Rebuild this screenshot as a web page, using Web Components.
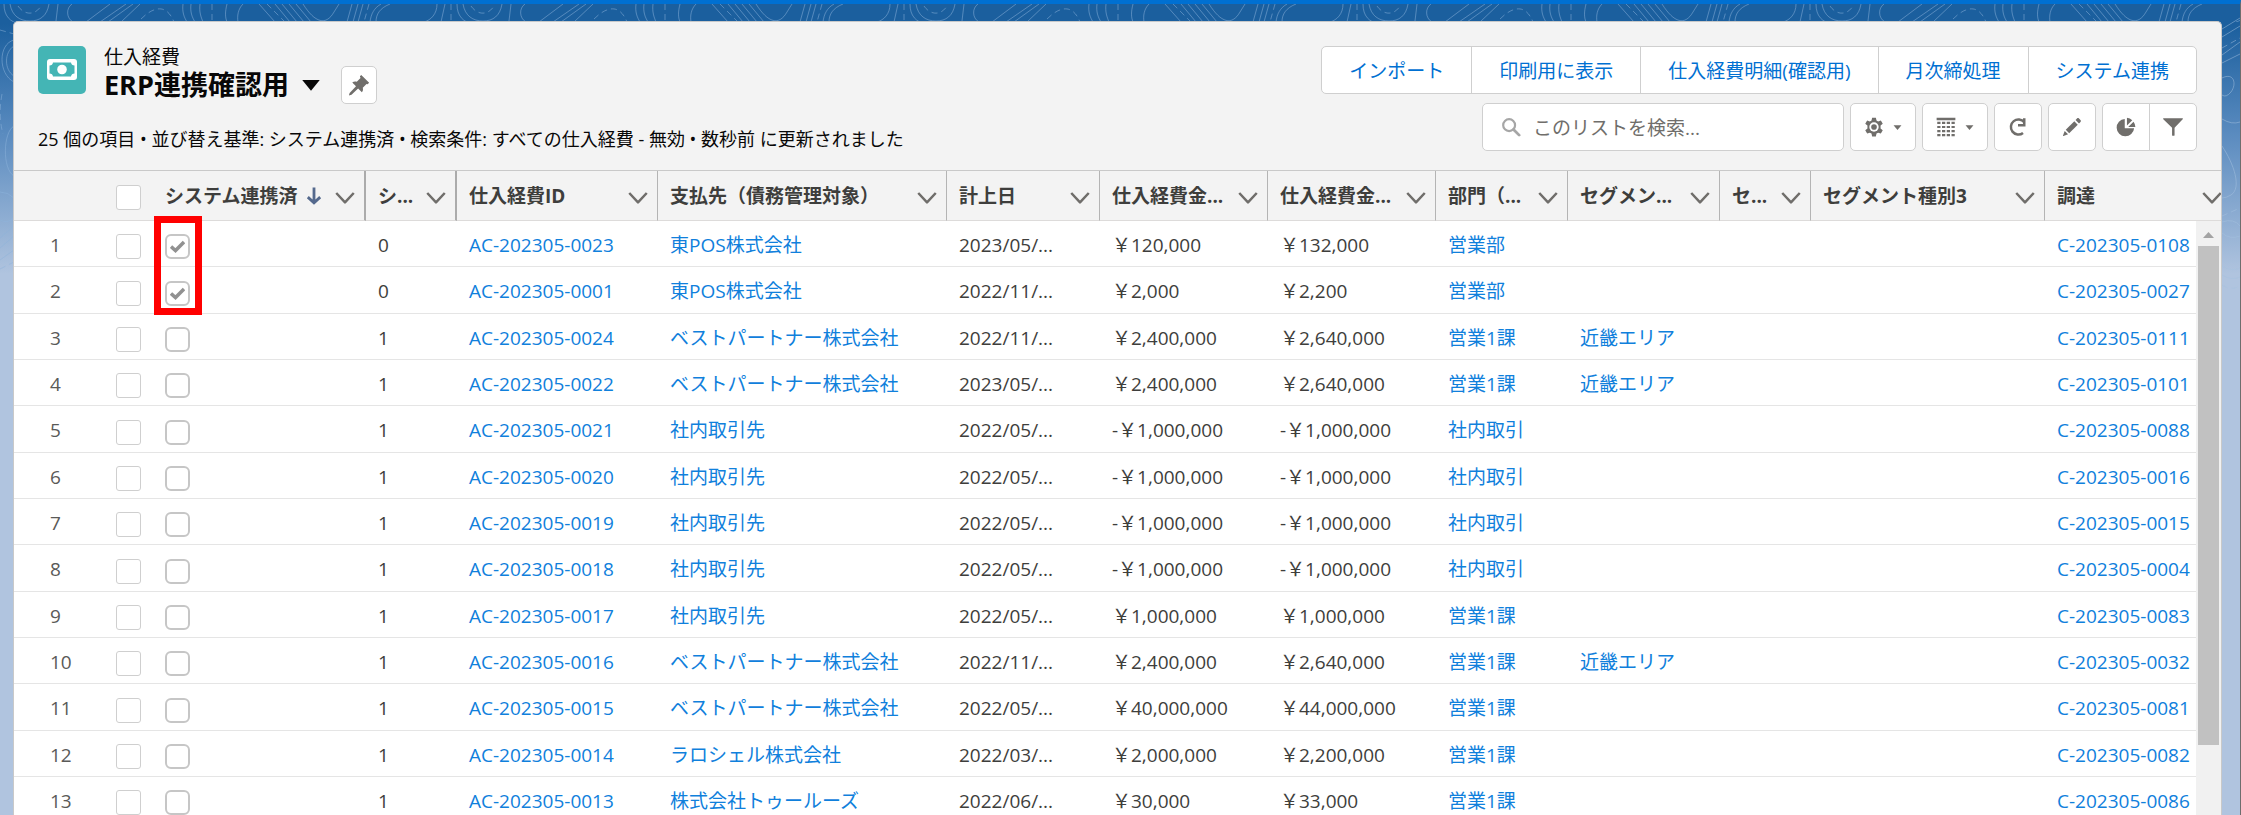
<!DOCTYPE html>
<html lang="ja">
<head>
<meta charset="utf-8">
<meta name="viewport" content="width=device-width, initial-scale=1">
<title>仕入経費</title>
<style>
  html, body { margin: 0; height: 100%; overflow: hidden; }
  body {
    font-family: "Open Sans", "Noto Sans CJK JP", sans-serif;
    font-size: 19px;
    color: #080707;
  }
</style>
</head>
<body>
<app-shell>
  <list-card>
    <list-header slot="header"></list-header>
    <list-table></list-table>
  </list-card>
</app-shell>

<script>
// ---- icons ----

const ICONS = {
  cash: `<rect x="1" y="5" width="30" height="21" rx="3" fill="currentColor"/>
    <path d="M7 8.500h18a3.500 3.500 0 0 0 3.500 3v8a3.500 3.500 0 0 0-3.500 3H7a3.500 3.500 0 0 0-3.500-3v-8a3.500 3.500 0 0 0 3.500-3z" fill="#44b5b5"/>
    <circle cx="16" cy="15.500" r="4.800" fill="currentColor"/>`,
  pin: `<path d="M19 2.500l10.500 10.500-2 2-1.500-.5-5 5c.7 2.500.4 4.500-1.200 6l-5-5L6 29l-3.500 1 1-3.500 8.500-8.800-5-5c1.700-1.500 3.700-1.800 6-1.200l5-5-.8-2.200z" fill="currentColor"/>`,
  caret: `<path d="M2 8h28L16 25z" fill="currentColor"/>`,
  search: `<circle cx="13" cy="13" r="9.500" fill="none" stroke="currentColor" stroke-width="3.500"/>
    <path d="M20 20l9 9" stroke="currentColor" stroke-width="4.500" stroke-linecap="round"/>`,
  gear: `<path d="M13 1h6l1 4.500 2.600 1.500 4.400-1.400 3 5.100-3.500 3v4.600l3.500 3-3 5.100-4.400-1.400-2.600 1.500-1 4.500h-6l-1-4.500-2.600-1.500-4.400 1.400-3-5.100 3.500-3v-4.600l-3.500-3 3-5.100 4.400 1.400 2.600-1.500z" fill="currentColor"/>
    <circle cx="16" cy="16" r="7.500" fill="#fff"/><circle cx="16" cy="16" r="4.500" fill="currentColor"/>`,
  grid: `<path d="M1 1h30v4H1z" fill="currentColor"/>
    <path d="M2 9.500h28M2 16h28M2 22.500h28M2 29h28" stroke="currentColor" stroke-width="3.500" stroke-dasharray="5.200 2.400"/>`,
  refresh: `<path d="M26 8.500A12 12 0 1 0 24 25.500" fill="none" stroke="currentColor" stroke-width="4"/>
    <path d="M28 2v13H16v-4h8V2z" fill="currentColor"/>`,
  pencil: `<path d="M24 2.500c1-1 2.200-1 3.200 0l2.300 2.300c1 1 1 2.200 0 3.200l-2.300 2.300-5.500-5.500z" fill="currentColor"/>
    <path d="M19.700 6.800l5.500 5.500L11.500 26 6 20.500z" fill="currentColor"/>
    <path d="M4.300 22.300l5.400 5.400-7.300 2.500c-.6.200-1-.2-.8-.8z" fill="currentColor"/>`,
  pie: `<path d="M14 3v15h15A14 14 0 1 1 14 3z" fill="currentColor"/>
    <path d="M17.500 1a14 14 0 0 1 8.500 4l-8.500 8.500z M28 7.500a14 14 0 0 1 3 8.500H19.500z" fill="currentColor"/>`,
  filter: `<path d="M1 2h30c.8 0 1 1 .5 1.500L18.500 17v12c0 1.500-4 1.500-4 0V17L.5 3.500C0 3 .2 2 1 2z" fill="currentColor"/>`,
  chevron: `<path d="M2 8l14 15L30 8" fill="none" stroke="currentColor" stroke-width="4" stroke-linejoin="round"/>`,
  arrow: `<path d="M16 1v26M5 18l11 10 11-10" fill="none" stroke="currentColor" stroke-width="5"/>`
};

class UiIcon extends HTMLElement {
  constructor() {
    super();
    this.attachShadow({ mode: "open" });
  }

  connectedCallback() {
    this.shadowRoot.innerHTML = `
      <style>
        :host { display: inline-flex; flex: none; width: 20px; height: 20px; }
        svg { width: 100%; height: 100%; }
      </style>
      <svg viewBox="0 0 32 32" aria-hidden="true">${ICONS[this.getAttribute("name")]}</svg>
    `;
  }
}
customElements.define("ui-icon", UiIcon);

// ---- page background ----

class AppShell extends HTMLElement {
  constructor() {
    super();
    this.attachShadow({ mode: "open" });
    this.shadowRoot.innerHTML = `
      <style>
        :host {
          display: block;
          box-sizing: border-box;
          height: 100vh;
          overflow: hidden;
          position: relative;
          padding: 17px 18px 0 13px;
          border-top: 4px solid #0070d2;
          border-right: 1px solid #6e6e6e;
          background: linear-gradient(#1b5f9e 0, #1b5f9e 20px, #5a8bbf 130px, #b0c4df 270px);
        }
        .waves { position: absolute; inset: 0; width: 100%; height: 300px; }
        .waves.side { left: auto; right: 0; width: 18px; }
        main { position: relative; height: 100%; }
      </style>
      <svg class="waves" aria-hidden="true" fill="none" stroke="#8db4dc" stroke-opacity=".5">
        <defs>
          <pattern id="contour" width="453" height="300" patternUnits="userSpaceOnUse">
            <path d="M4 0C4 12 10 18 20 20M10 0C12 12 20 17 30 17S47 12 49 0M58 0L56 17M72 0C66 4 66 14 73 18M110 0L86 18M126 0L100 18M133 0L108 18M140 0L121 18M183 0C182 8 184 13 187 18M191 0C190 8 192 13 195 18M200 0C199 8 201 13 203 18M227 0C225 8 225 13 227 18M243 0C238 5 237 12 238 18M259 0L275 18M275 0L290 18M282 0L297 18M289 0L304 18M296 0L311 18M303 0C315 19 326 22 334 8L339 0M352 0L347 18M358 0L353 18M363 0L358 18M390 0C380 4 376 10 376 18M381 0C374 4 371 10 370 18M437 0C437 10 431 16 424 18M445 0L441 18"/>
            <path stroke-dasharray="6 4" d="M18 2C24 11 35 12 41 2M141 15C152 4 166-2 174 18M212 0V18M267 0L285 18M369 0L364 18M451 0V18"/>
          </pattern>
        </defs>
        <rect width="100%" height="18" fill="url(#contour)" stroke="none"/>
        <path d="M14 36C-2 40-2 70 14 78M14 42C4 48 4 66 14 72M14 122C3 128 2 165 14 172M0 188Q8 188 14 194M0 216Q7 220 14 214M0 234L14 222M0 244L14 232M0 256L14 246"/>
        <path stroke-dasharray="6 4" d="M0 26L14 30M2 90Q-2 112 3 130M0 265L14 258"/>
      </svg>
      <svg class="waves side" aria-hidden="true" fill="none" stroke="#a5c1e0" stroke-opacity=".5">
        <path d="M0 25L18 14M0 33L18 22M0 51L18 38M0 59L18 50M0 74C12 68 15 80 9 88Q4 94 0 91M0 115Q10 121 18 118M0 142C12 160 20 184 9 191Q4 194 0 194M0 218Q12 214 18 222M0 229Q8 236 18 232M0 262Q10 268 18 264M0 271Q10 277 18 273"/>
        <path stroke-dasharray="6 4" d="M0 44L18 34M0 212L18 204M0 281Q10 287 18 282"/>
      </svg>
      <main><slot></slot></main>
    `;
  }
}
customElements.define("app-shell", AppShell);

class ListCard extends HTMLElement {
  constructor() {
    super();
    this.attachShadow({ mode: "open" });
    this.shadowRoot.innerHTML = `
      <style>
        :host {
          display: flex;
          flex-direction: column;
          box-sizing: border-box;
          height: 100%;
          overflow: hidden;
          border: 1px solid #c9c9c9;
          border-bottom: 0;
          border-radius: 5px 5px 0 0;
          background: #f3f3f3;
        }
      </style>
      <slot name="header"></slot>
      <slot></slot>
    `;
  }
}
customElements.define("list-card", ListCard);

// ---- list view header ----

class ListHeader extends HTMLElement {
  constructor() {
    super();
    this.attachShadow({ mode: "open" });
    this.shadowRoot.innerHTML = `
      <style>
        :host {
          display: flex;
          justify-content: space-between;
          flex: none;
          padding: 24px 24px 19px;
        }
        button, input { font: inherit; }
        button {
          display: inline-flex;
          align-items: center;
          justify-content: center;
          gap: 9px;
          height: 48px;
          padding: 0;
          border: 1px solid #cfcfcf;
          border-radius: 5px;
          background: #fff;
          color: #706e6b;
        }
        .info { display: flex; flex-direction: column; justify-content: space-between; }
        .title { display: flex; gap: 18px; }
        .badge {
          display: flex;
          align-items: center;
          justify-content: center;
          width: 48px;
          height: 48px;
          border-radius: 5px;
          background: #44b5b5;
          color: #fff;
        }
        .badge ui-icon { width: 32px; height: 32px; }
        p, h1 { margin: 0; }
        .object { line-height: 22px; }
        .name { display: flex; align-items: center; height: 34px; }
        h1 { font-size: 27px; line-height: 34px; }
        .name > .pick {
          width: 20px; height: 20px; margin: 0 20px 0 12px;
          border: 0; background: none; color: #080707;
        }
        .name > .pin { width: 36px; height: 38px; }
        .pin ui-icon { width: 24px; height: 24px; }
        .status { font-size: 18px; line-height: 24px; }
        .tools { display: flex; flex-direction: column; align-items: flex-end; gap: 9px; }
        .row { display: flex; gap: 6px; }
        .group { display: flex; }
        .group button { border-radius: 0; margin-left: -1px; }
        .group button:first-child { border-radius: 5px 0 0 5px; margin-left: 0; }
        .group button:last-child { border-radius: 0 5px 5px 0; }
        .actions button { padding: 0 27px; color: #0070d2; }
        .search {
          display: flex;
          align-items: center;
          gap: 12px;
          box-sizing: border-box;
          width: 362px;
          padding: 0 18px;
          border: 1px solid #cfcfcf;
          border-radius: 5px;
          background: #fff;
          color: #a6a6a6;
        }
        input { flex: 1; min-width: 0; padding: 2px 0 0; border: 0; outline: 0; background: none; }
        input::placeholder { color: #706e6b; opacity: 1; }
        .menu { width: 66px; }
        .menu ui-icon + ui-icon { width: 9px; height: 9px; }
        .icon { width: 48px; }
      </style>
      <div class="info">
        <div class="title">
          <span class="badge"><ui-icon name="cash"></ui-icon></span>
          <div>
            <p class="object">仕入経費</p>
            <div class="name">
              <h1>ERP連携確認用</h1>
              <button class="pick" aria-label="リストビューを選択"><ui-icon name="caret"></ui-icon></button>
              <button class="pin" aria-label="ピン"><ui-icon name="pin"></ui-icon></button>
            </div>
          </div>
        </div>
        <p class="status">25 個の項目 • 並び替え基準: システム連携済 • 検索条件: すべての仕入経費 - 無効 • 数秒前 に更新されました</p>
      </div>
      <div class="tools">
        <div class="group actions">
          <button>インポート</button>
          <button>印刷用に表示</button>
          <button>仕入経費明細(確認用)</button>
          <button>月次締処理</button>
          <button>システム連携</button>
        </div>
        <div class="row">
          <label class="search">
            <ui-icon name="search"></ui-icon>
            <input type="search" placeholder="このリストを検索..." aria-label="このリストを検索">
          </label>
          <button class="menu" aria-label="リストビューコントロール"><ui-icon name="gear"></ui-icon><ui-icon name="caret"></ui-icon></button>
          <button class="menu" aria-label="表示形式"><ui-icon name="grid"></ui-icon><ui-icon name="caret"></ui-icon></button>
          <button class="icon" aria-label="更新"><ui-icon name="refresh"></ui-icon></button>
          <button class="icon" aria-label="編集"><ui-icon name="pencil"></ui-icon></button>
          <div class="group">
            <button class="icon" aria-label="グラフ"><ui-icon name="pie"></ui-icon></button>
            <button class="icon" aria-label="絞り込み"><ui-icon name="filter"></ui-icon></button>
          </div>
        </div>
      </div>
    `;
  }
}
customElements.define("list-header", ListHeader);

// ---- table ----

// label, width
const COLUMNS = [
  ["システム連携済", 213],
  ["シ...", 91],
  ["仕入経費ID", 201],
  ["支払先（債務管理対象）", 289],
  ["計上日", 153],
  ["仕入経費金...", 168],
  ["仕入経費金...", 168],
  ["部門（...", 132],
  ["セグメン...", 152],
  ["セ...", 91],
  ["セグメント種別3", 234],
  ["調達", 187]
];

// done, count, id, payee, date, amount, amount with tax, department, segment, procurement
const ROWS = [
  [true, 0, "0023", "東POS株式会社", "2023/05/...", "￥120,000", "￥132,000", "営業部", "", "0108"],
  [true, 0, "0001", "東POS株式会社", "2022/11/...", "￥2,000", "￥2,200", "営業部", "", "0027"],
  [false, 1, "0024", "ベストパートナー株式会社", "2022/11/...", "￥2,400,000", "￥2,640,000", "営業1課", "近畿エリア", "0111"],
  [false, 1, "0022", "ベストパートナー株式会社", "2023/05/...", "￥2,400,000", "￥2,640,000", "営業1課", "近畿エリア", "0101"],
  [false, 1, "0021", "社内取引先", "2022/05/...", "-￥1,000,000", "-￥1,000,000", "社内取引", "", "0088"],
  [false, 1, "0020", "社内取引先", "2022/05/...", "-￥1,000,000", "-￥1,000,000", "社内取引", "", "0016"],
  [false, 1, "0019", "社内取引先", "2022/05/...", "-￥1,000,000", "-￥1,000,000", "社内取引", "", "0015"],
  [false, 1, "0018", "社内取引先", "2022/05/...", "-￥1,000,000", "-￥1,000,000", "社内取引", "", "0004"],
  [false, 1, "0017", "社内取引先", "2022/05/...", "￥1,000,000", "￥1,000,000", "営業1課", "", "0083"],
  [false, 1, "0016", "ベストパートナー株式会社", "2022/11/...", "￥2,400,000", "￥2,640,000", "営業1課", "近畿エリア", "0032"],
  [false, 1, "0015", "ベストパートナー株式会社", "2022/05/...", "￥40,000,000", "￥44,000,000", "営業1課", "", "0081"],
  [false, 1, "0014", "ラロシェル株式会社", "2022/03/...", "￥2,000,000", "￥2,200,000", "営業1課", "", "0082"],
  [false, 1, "0013", "株式会社トゥールーズ", "2022/06/...", "￥30,000", "￥33,000", "営業1課", "", "0086"]
];

const link = text => (text ? `<a href="#">${text}</a>` : "");

class ListTable extends HTMLElement {
  constructor() {
    super();
    this.attachShadow({ mode: "open" });
  }

  connectedCallback() {
    this.shadowRoot.innerHTML = `
      <style>
        :host {
          display: block;
          flex: 1;
          min-height: 0;
          position: relative;
          overflow: hidden;
          border-top: 1px solid #c9c9c9;
          color: #3e3e3c;
        }
        table {
          width: calc(100% + 11px);
          table-layout: fixed;
          border-collapse: separate;
          border-spacing: 0;
        }
        th, td { box-sizing: border-box; padding: 0 0 0 12px; text-align: left; white-space: nowrap; line-height: 24px; }
        th { height: 50px; border-right: 1px solid #b4b4b4; border-bottom: 1px solid #dddbda; background: #f3f3f3; }
        th.plain { border-right: 0; }
        th.wide { border-right: 2px solid #ababab; }
        td { height: 46px; padding-top: 2px; border-bottom: 1px solid #e5e5e5; background: #fff; }
        tr:nth-child(3n + 2) td { height: 47px; }
        td.num { padding-left: 36px; color: #5a5a58; }
        .head { display: flex; align-items: center; gap: 8px; }
        .head button {
          display: flex;
          margin: 4px 9px 0 auto;
          padding: 0;
          border: 0;
          background: none;
          color: #706e6b;
        }
        .head .sort { width: 18px; height: 20px; color: #54698d; }
        a { color: #1080dc; text-decoration: none; }
        input {
          display: block;
          appearance: none;
          box-sizing: border-box;
          width: 25px;
          height: 25px;
          margin: 4px 0 0;
          border: 1px solid #cfcfcf;
          border-radius: 3px;
          background: #fff;
        }
        .flag { position: relative; width: 25px; }
        .flag input { border: 2px solid #c6c6c6; border-radius: 6px; }
        .flag svg { position: absolute; left: 5px; top: 6px; width: 15px; height: 13px; pointer-events: none; }
        .mark {
          position: absolute;
          left: 140px;
          top: 45px;
          box-sizing: border-box;
          width: 48px;
          height: 99px;
          border: 7px solid #f00;
          pointer-events: none;
        }
        .scroll {
          position: absolute;
          top: 50px;
          right: 0;
          bottom: 0;
          width: 25px;
          background: #f1f1f1;
        }
        .scroll svg { display: block; width: 11px; height: 6px; margin: 11px 0 8px 7px; }
        .thumb { width: 21px; height: 499px; margin-left: 2px; background: #c1c1c1; }
      </style>
      <table>
        <colgroup>
          <col style="width:90px"><col style="width:49px">
          ${COLUMNS.map(([, w], i) => (i < COLUMNS.length - 1 ? `<col style="width:${w}px">` : "<col>")).join("")}
        </colgroup>
        <thead>
          <tr>
            <th class="plain"></th>
            <th class="plain"><input type="checkbox" aria-label="すべての項目を選択"></th>
            ${COLUMNS.map(([label], i) => this.headCell(label, i)).join("")}
          </tr>
        </thead>
        <tbody>${ROWS.map((row, i) => this.bodyRow(row, i)).join("")}</tbody>
      </table>
      <div class="mark"></div>
      <div class="scroll">
        <svg viewBox="0 0 11 6"><path d="M0 6L5.500 0 11 6z" fill="#a3a3a3"/></svg>
        <div class="thumb"></div>
      </div>
    `;
  }

  headCell(label, i) {
    const sort = i === 0 ? `<ui-icon class="sort" name="arrow"></ui-icon>` : "";
    return `<th class="${i < 2 ? "wide" : ""}"><div class="head"><span>${label}</span>${sort}
      <button aria-label="列のアクションを表示"><ui-icon name="chevron"></ui-icon></button></div></th>`;
  }

  bodyRow([done, count, id, payee, date, amount, taxed, dept, segment, order], i) {
    const tick = done
      ? `<svg viewBox="0 0 15 13"><path d="M1 6.500l4.500 4L14 2" fill="none" stroke="#919191" stroke-width="3.500"/></svg>`
      : "";
    return `
      <tr>
        <td class="num">${i + 1}</td>
        <td><input type="checkbox" aria-label="項目 ${i + 1} を選択"></td>
        <td><div class="flag"><input type="checkbox" aria-label="システム連携済" disabled ${done ? "checked" : ""}>${tick}</div></td>
        <td>${count}</td>
        <td>${link("AC-202305-" + id)}</td>
        <td>${link(payee)}</td>
        <td>${date}</td>
        <td>${amount}</td>
        <td>${taxed}</td>
        <td>${link(dept)}</td>
        <td>${link(segment)}</td>
        <td></td>
        <td></td>
        <td>${link("C-202305-" + order)}</td>
      </tr>`;
  }
}
customElements.define("list-table", ListTable);
</script>
</body>
</html>
